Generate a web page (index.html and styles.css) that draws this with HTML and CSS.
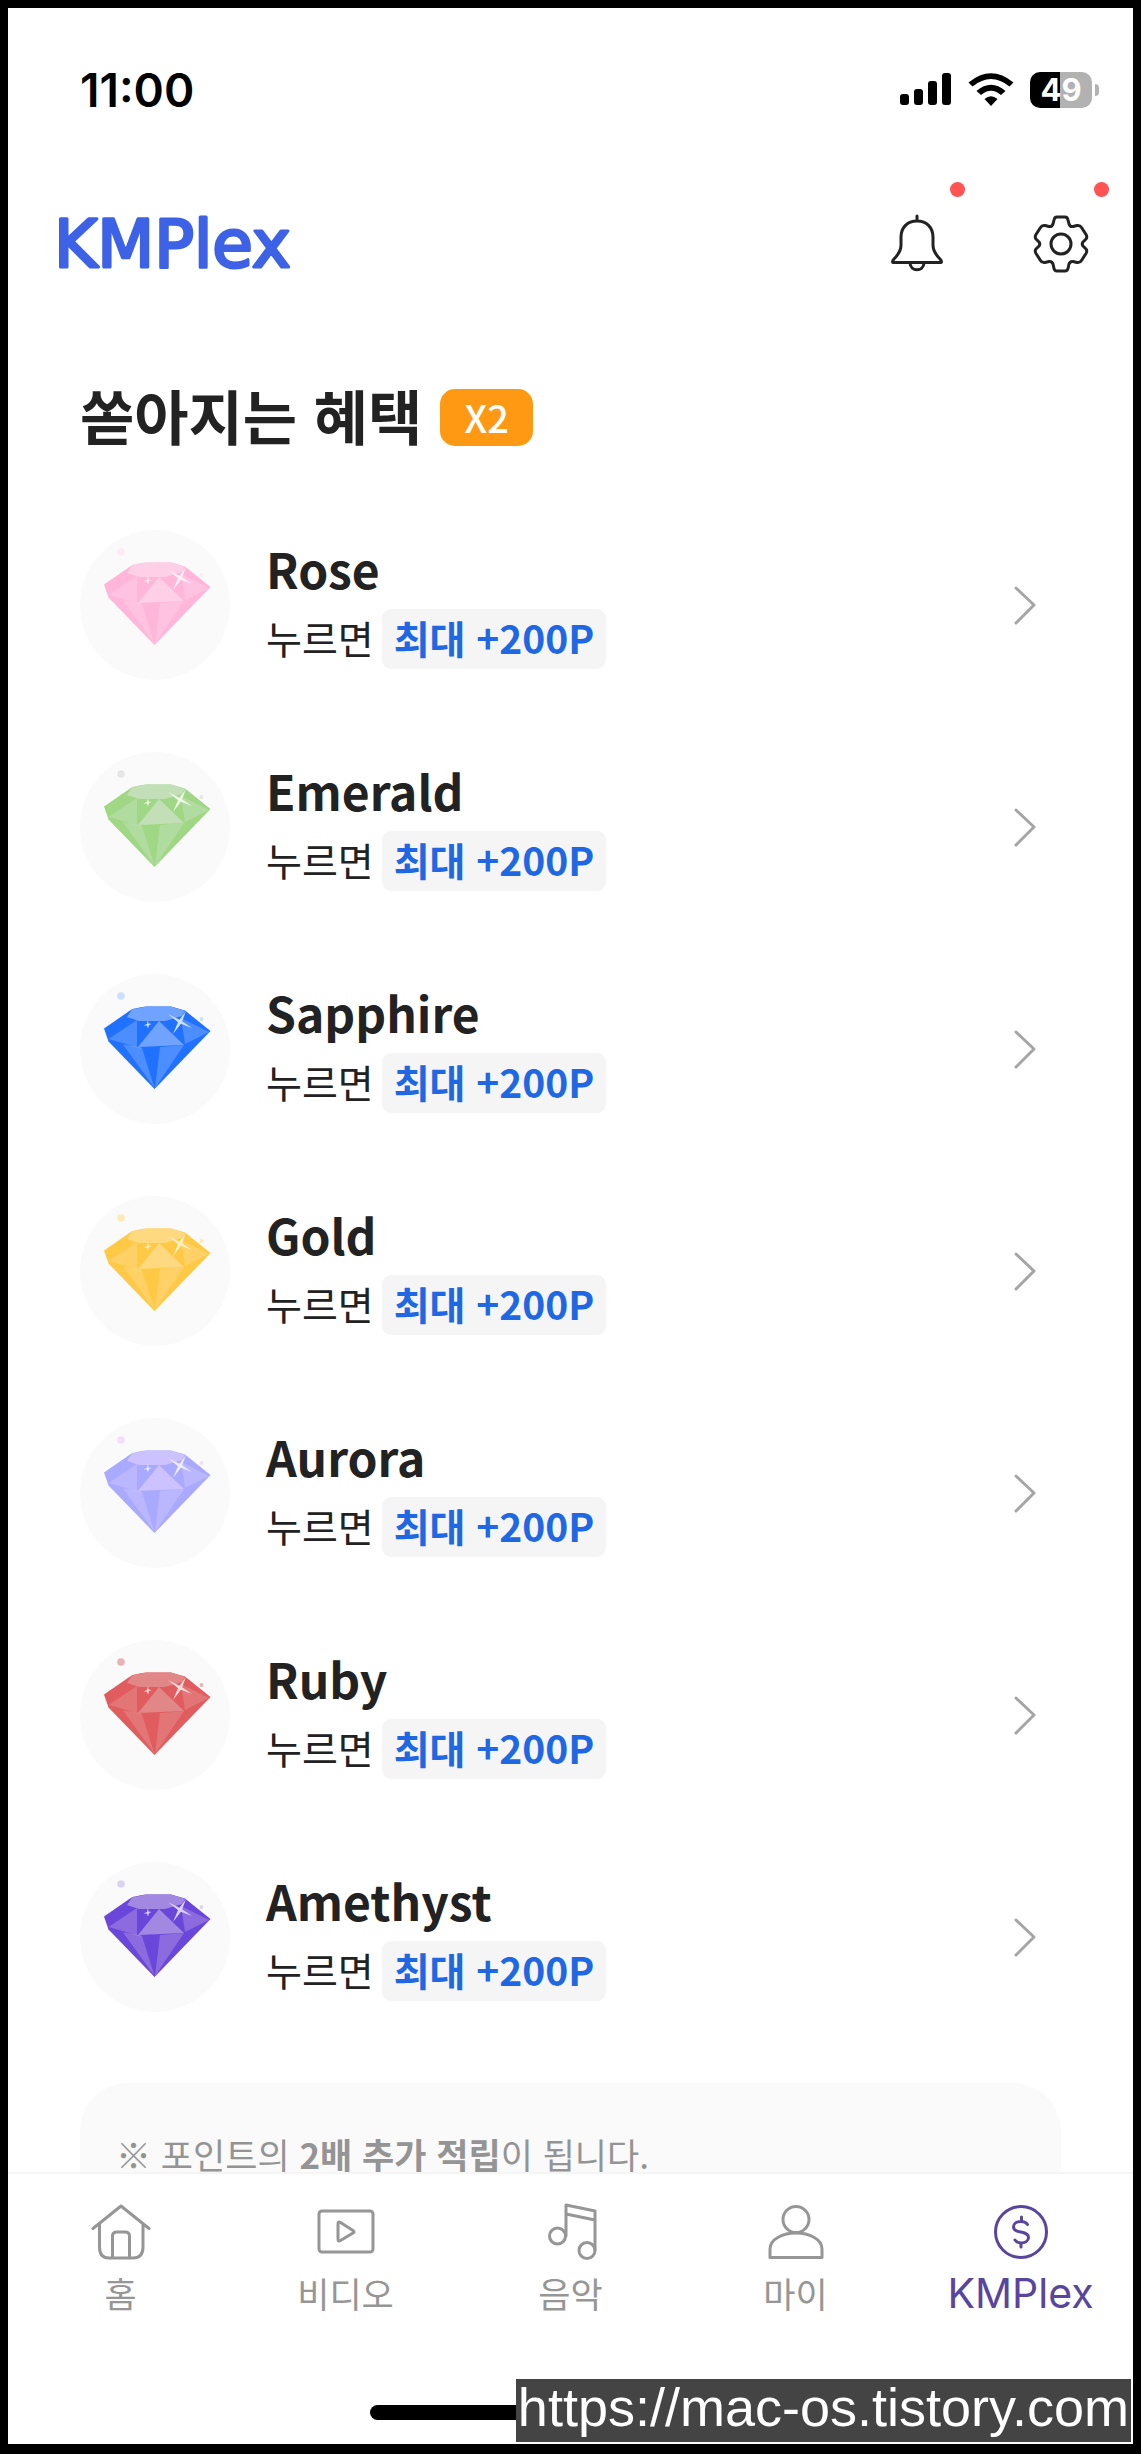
FILE: index.html
```html
<!DOCTYPE html>
<html lang="ko">
<head>
<meta charset="utf-8">
<meta name="viewport" content="width=device-width, initial-scale=1">
<title>KMPlex</title>
<link rel="stylesheet" href="styles.css">
</head>
<body>
<svg class="defs" aria-hidden="true">
  <symbol id="gem" viewBox="0 0 150 150">
    <path d="M24 54.500L51.500 35.500Q54 34.300 66 32.500H91L105 36.500L130.500 57L74.500 115L28.500 67.500Z" fill="var(--base)"/>
    <path d="M47 43L52 35.500L66 32.500H91L105 37L102 42L85 47H59Z" fill="var(--light)"/>
    <path d="M57 46V73L28.500 65Z" fill="var(--mid)"/>
    <path d="M79 47L104 71L58 73Z" fill="var(--light)"/>
    <path d="M101 44L129 58L105 70Z" fill="var(--mid)"/>
    <path d="M43 70.500L62 74L74.500 114Z" fill="var(--mid)"/>
    <path d="M80 73L104 71L75 114Z" fill="var(--mid)"/>
    <path d="M43 70L58 73L62 74L60 74.500Z" fill="var(--light)"/>
    <path d="M88 40L101 46.500L112 54L99 49ZM106 37L101.500 49L93 60L98.500 47Z" fill="var(--spark)"/>
    <path d="M63.500 51.500L67 50L68 46L68.500 49.500L71.500 50L69 51L68 54.500L67 51.500Z" fill="var(--spark)"/>
    <circle cx="41" cy="22" r="3.800" fill="var(--dot)"/>
    <circle cx="121.500" cy="45" r="2" fill="var(--dot)"/>
  </symbol>
</svg>
<div class="screen">
  <div class="status">
    <time class="clock">11:00</time>
    <div class="indicators">
      <svg class="signal" viewBox="0 0 52 34" aria-label="signal">
        <rect x="0" y="21" width="9" height="11" rx="3"/><rect x="14" y="16" width="9" height="16" rx="3"/><rect x="28" y="8" width="9" height="24" rx="3"/><rect x="42" y="0" width="9" height="32" rx="3"/>
      </svg>
      <svg class="wifi" viewBox="0 0 46 34" aria-label="wi-fi">
        <path d="M0.500 9.500Q23-9 45.500 9.500L41.500 13.500Q23-1.500 4.500 13.500ZM8.500 18Q23 5.500 37.500 18L33 22Q23 13.500 13 22ZM16.500 26Q23 20.500 29.500 26L23 33Z"/>
      </svg>
      <div class="battery"><span class="level">49</span><span class="cap"></span></div>
    </div>
  </div>

  <header class="topbar">
    <a class="brand" href="#home">
      <svg class="logo" viewBox="0 0 250 84"><text x="-2" y="65">KMPlex</text></svg>
    </a>
    <div class="actions">
      <button class="icon-button" type="button" aria-label="알림">
        <svg viewBox="0 0 60 60"><path d="M30 2V7M30 7C20 7 14 14 14 23V31C14 37 11 41 7 45Q4 48.500 7 48.500H53Q56 48.500 53 45C49 41 46 37 46 31V23C46 14 40 7 30 7ZM23 49C23.500 58 36.500 58 37 49"/></svg>
        <span class="badge"></span>
      </button>
      <button class="icon-button" type="button" aria-label="설정">
        <svg viewBox="0 0 60 60"><path d="M26 3H34Q36.500 3 37 6L38 10Q39 13 42 12.500L46 11.500Q49 11 50.500 13.500L55 20.500Q56.500 23 55 25L52 28Q50.500 30 52 32L55 35Q56.500 37 55 39.500L50.500 46.500Q49 49 46 48.500L42 47.500Q39 47 38 50L37 54.500Q36.500 57 34 57H26Q23.500 57 23 54.500L22 50Q21 47 18 47.500L14 48.500Q11 49 9.500 46.500L5 39.500Q3.500 37 5 35L8 32Q9.500 30 8 28L5 25Q3.500 23 5 20.500L9.500 13.500Q11 11 14 11.500L18 12.500Q21 13 22 10L23 6Q23.500 3 26 3Z"/><circle cx="30" cy="30" r="10"/></svg>
        <span class="badge"></span>
      </button>
    </div>
  </header>

  <main class="content">
    <div class="heading">
      <h1>쏟아지는 혜택</h1>
      <span class="multiplier">X2</span>
    </div>

    <ul class="gems">
      <li><a class="gem-row" href="#rose"><span class="gem rose"><svg><use href="#gem"/></svg></span><span class="info"><strong class="name">Rose</strong><span class="reward"><span>누르면</span><b class="points">최대 +200P</b></span></span><svg class="chevron" viewBox="0 0 24 40"><path d="M3 3L21 20L3 38"/></svg></a></li>
      <li><a class="gem-row" href="#emerald"><span class="gem emerald"><svg><use href="#gem"/></svg></span><span class="info"><strong class="name">Emerald</strong><span class="reward"><span>누르면</span><b class="points">최대 +200P</b></span></span><svg class="chevron" viewBox="0 0 24 40"><path d="M3 3L21 20L3 38"/></svg></a></li>
      <li><a class="gem-row" href="#sapphire"><span class="gem sapphire"><svg><use href="#gem"/></svg></span><span class="info"><strong class="name">Sapphire</strong><span class="reward"><span>누르면</span><b class="points">최대 +200P</b></span></span><svg class="chevron" viewBox="0 0 24 40"><path d="M3 3L21 20L3 38"/></svg></a></li>
      <li><a class="gem-row" href="#gold"><span class="gem gold"><svg><use href="#gem"/></svg></span><span class="info"><strong class="name">Gold</strong><span class="reward"><span>누르면</span><b class="points">최대 +200P</b></span></span><svg class="chevron" viewBox="0 0 24 40"><path d="M3 3L21 20L3 38"/></svg></a></li>
      <li><a class="gem-row" href="#aurora"><span class="gem aurora"><svg><use href="#gem"/></svg></span><span class="info"><strong class="name">Aurora</strong><span class="reward"><span>누르면</span><b class="points">최대 +200P</b></span></span><svg class="chevron" viewBox="0 0 24 40"><path d="M3 3L21 20L3 38"/></svg></a></li>
      <li><a class="gem-row" href="#ruby"><span class="gem ruby"><svg><use href="#gem"/></svg></span><span class="info"><strong class="name">Ruby</strong><span class="reward"><span>누르면</span><b class="points">최대 +200P</b></span></span><svg class="chevron" viewBox="0 0 24 40"><path d="M3 3L21 20L3 38"/></svg></a></li>
      <li><a class="gem-row" href="#amethyst"><span class="gem amethyst"><svg><use href="#gem"/></svg></span><span class="info"><strong class="name">Amethyst</strong><span class="reward"><span>누르면</span><b class="points">최대 +200P</b></span></span><svg class="chevron" viewBox="0 0 24 40"><path d="M3 3L21 20L3 38"/></svg></a></li>
    </ul>

    <p class="note">※ 포인트의 <b>2배 추가 적립</b>이 됩니다.</p>
  </main>

  <nav class="tabs">
    <a class="tab" href="#home"><svg viewBox="0 0 60 60"><path d="M2 26.500L30 4L58 26.500M8.500 22V45Q8.500 56 18 56H42Q52 56 52 45V22M21.500 56V34Q21.500 30 26 30H34Q38.500 30 38.500 34V56"/></svg><span>홈</span></a>
    <a class="tab" href="#video"><svg viewBox="0 0 60 60"><rect x="3" y="9" width="54" height="41" rx="3"/><path d="M22 22V37Q22 40 24.500 38.500L37 31Q39 30 37 28.500L24.500 20.500Q22 19 22 22Z"/></svg><span>비디오</span></a>
    <a class="tab" href="#music"><svg viewBox="0 0 60 60"><path d="M25 34V3L54 9V48M25 12L54 18"/><circle cx="16.500" cy="34" r="8"/><circle cx="46" cy="48.500" r="8"/></svg><span>음악</span></a>
    <a class="tab" href="#my"><svg viewBox="0 0 60 60"><circle cx="30" cy="17.500" r="13"/><path d="M4 55.500V47C4 37 17 31 30 31S56 37 56 47V55.500Z"/></svg><span>마이</span></a>
    <a class="tab active" href="#kmplex"><svg viewBox="0 0 60 60"><circle cx="30" cy="30" r="25.500"/><path d="M30.500 15V19.500M30 41V45M36.500 22.500Q34.500 19.500 30 19.500C25 19.500 22.500 22 22.500 25C22.500 28.500 26 29.500 30 30C35 31 37.500 32.500 37.500 35.500C37.500 39 34 41 30 41Q26 41 24 38"/></svg><span class="latin">KMPlex</span></a>
  </nav>

  <footer class="bottom">
    <span class="home-bar"></span>
    <a class="watermark" href="https://mac-os.tistory.com">https://mac-os.tistory.com</a>
  </footer>
</div>
</body>
</html>
```
FILE: styles.css
```css
* { box-sizing: border-box; }

body {
  margin: 0;
  background: #fff;
  color: #222;
  font-family: "Noto Sans CJK KR", sans-serif;
}

a { color: inherit; text-decoration: none; }

.defs { position: absolute; width: 0; height: 0; }

.screen {
  display: flex;
  flex-direction: column;
  height: 100vh;
  border: 8px solid #000;
  border-bottom-width: 10px;
  overflow: hidden;
}

/* status bar */
.status {
  display: flex;
  flex: none;
  align-items: center;
  justify-content: space-between;
  height: 164px;
  padding: 0 34px 0 72px;
}

.clock {
  color: #000;
  font: 600 46px/52px Inter, sans-serif;
}

.indicators { display: flex; align-items: center; gap: 16px; }
.signal { width: 52px; height: 34px; }
.wifi { width: 46px; height: 34px; }
.battery { display: flex; align-items: center; gap: 3px; }

.level {
  width: 62px;
  height: 36px;
  border-radius: 10px;
  background: linear-gradient(90deg, #000 30px, #b2b2b2 30px);
  color: #fff;
  font: 700 31px/36px Inter, sans-serif;
  text-align: center;
}

.cap { width: 4px; height: 12px; border-radius: 0 6px 6px 0; background: #b2b2b2; }

/* header */
.topbar {
  display: flex;
  flex: none;
  align-items: center;
  justify-content: space-between;
  height: 144px;
  padding: 0 42px 0 48px;
}

.brand { display: block; }
.logo { display: block; width: 250px; height: 84px; overflow: visible; }

.logo text {
  fill: #3d62e6;
  stroke: #3d62e6;
  stroke-width: 3px;
  stroke-linejoin: round;
  font: 66px "DejaVu Sans", sans-serif;
}

.actions { display: flex; gap: 84px; }

.icon-button {
  position: relative;
  width: 60px;
  height: 60px;
  padding: 0;
  border: 0;
  background: none;
  color: #222;
}

.icon-button svg,
.tab svg {
  display: block;
  width: 60px;
  height: 60px;
  fill: none;
  stroke: currentColor;
  stroke-width: 3;
  stroke-linecap: round;
  stroke-linejoin: round;
}

.badge {
  position: absolute;
  top: -32px;
  right: -18px;
  width: 15px;
  height: 15px;
  border-radius: 50%;
  background: #ff5252;
}

/* content */
.content { flex: 1; min-height: 0; overflow: hidden; padding: 56px 72px 0; }

.heading { display: flex; align-items: center; gap: 18px; height: 90px; }
h1 { margin: 0; padding-bottom: 4px; font-size: 59px; font-weight: 700; line-height: 86px; }

.multiplier {
  width: 93px;
  height: 57px;
  border-radius: 15px;
  background: #ff9914;
  color: #fff;
  font-size: 38px;
  font-weight: 500;
  line-height: 56px;
  text-align: center;
}

.gems { display: flex; flex-direction: column; gap: 72px; margin: 68px 0 71px; padding: 0; list-style: none; }
.gem-row { display: flex; align-items: center; height: 150px; padding-right: 24px; }
.gem { width: 150px; height: 150px; margin-right: 36px; border-radius: 50%; background: #fafafa; }
.gem svg { display: block; width: 150px; height: 150px; }
.info { display: flex; flex: 1; flex-direction: column; align-self: flex-start; gap: 3px; }
.name { font-size: 48px; font-weight: 700; line-height: 76px; }
.reward { display: flex; align-items: flex-start; gap: 8px; font-size: 39px; font-weight: 400; line-height: 56px; }

.points {
  padding: 0 12px 4px;
  border-radius: 9px;
  background: #f5f5f5;
  color: #2068e3;
  font-weight: 700;
}

.chevron { width: 24px; height: 40px; fill: none; stroke: #a5a5a5; stroke-width: 3; stroke-linecap: round; stroke-linejoin: round; }

.rose { --base: #ffb6d9; --mid: #ffc2e0; --light: #ffcfe7; --spark: #fff0f8; --dot: #ffe9f4; }
.emerald { --base: #a0d784; --mid: #b1dca0; --light: #c3dfb8; --spark: #edf8e7; --dot: #e6e6e6; }
.sapphire { --base: #2171ff; --mid: #4c8dff; --light: #70a3ff; --spark: #cfe0ff; --dot: #ccdfff; }
.gold { --base: #ffc945; --mid: #ffd166; --light: #ffd97f; --spark: #fff0c4; --dot: #ffeab5; }
.aurora { --base: #a9a9ff; --mid: #bbb7ff; --light: #ccc2ff; --spark: #eeebff; --dot: #f1dffc; }
.ruby { --base: #e05c5e; --mid: #e27576; --light: #e28788; --spark: #f8d8d8; --dot: #e7b3b4; }
.amethyst { --base: #6b46da; --mid: #8b6bdd; --light: #a388e2; --spark: #ddd2fb; --dot: #dbd4f0; }

.note {
  margin: 0;
  padding: 51px 36px 0;
  border-radius: 48px 48px 0 0;
  background: #fafafa;
  color: #949494;
  font-size: 35px;
  line-height: 40px;
}

/* tab bar */
.tabs {
  display: grid;
  flex: none;
  grid-template-columns: repeat(5, 1fr);
  height: 182px;
  border-top: 2px solid #f5f5f5;
  background: #fff;
  color: #969696;
}

.tab { display: flex; flex-direction: column; align-items: center; gap: 4px; padding-top: 28px; font-size: 35px; line-height: 54px; }
.active { color: #59459e; }
.latin { font-family: Inter, sans-serif; font-size: 41px; }

/* bottom area */
.bottom { position: relative; flex: none; height: 90px; padding-top: 51px; }
.home-bar { display: block; width: 401px; height: 15px; margin: 0 auto; border-radius: 8px; background: #000; }

.watermark {
  position: absolute;
  right: 2px;
  bottom: 2px;
  height: 63px;
  padding: 0 2px;
  background: #444;
  color: #fff;
  font: 54px/56px "Liberation Sans", sans-serif;
}
```
